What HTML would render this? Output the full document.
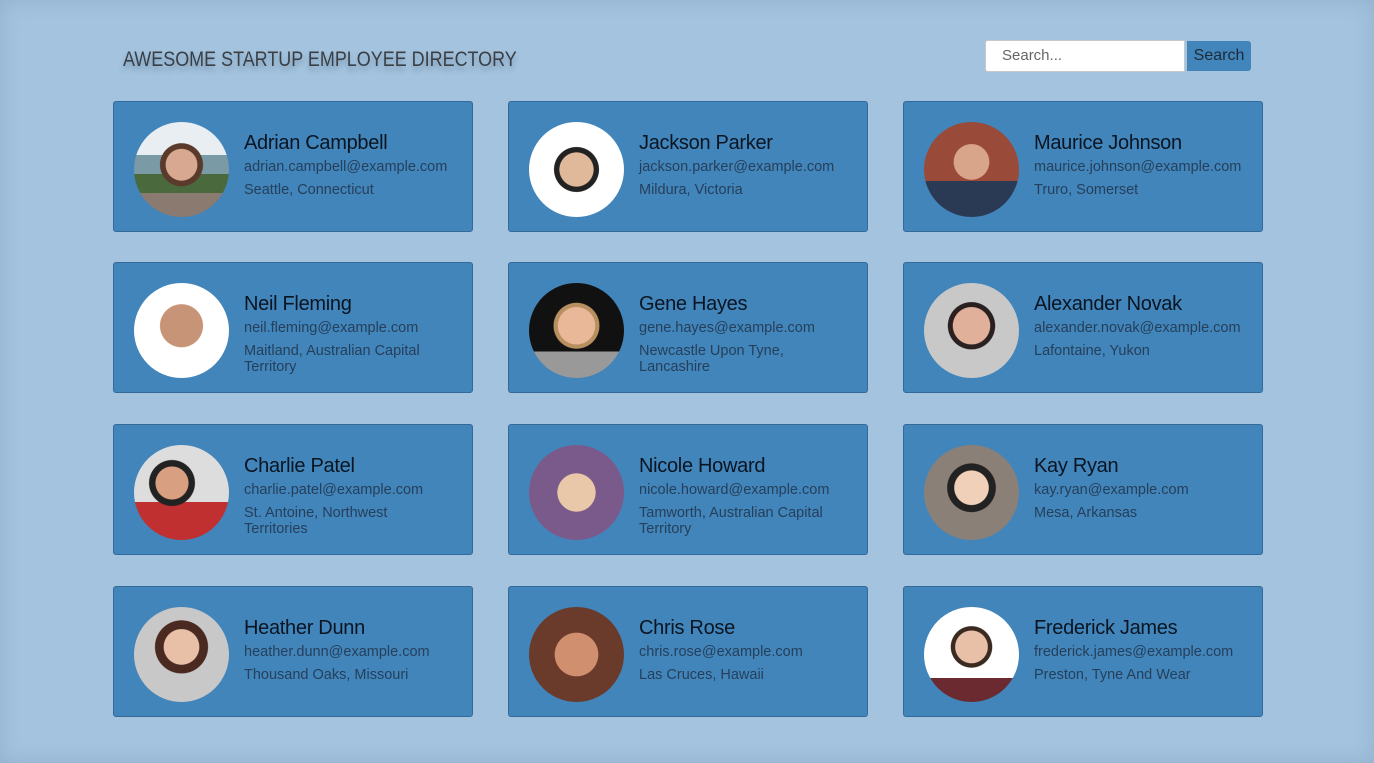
<!DOCTYPE html>
<html><head><meta charset="utf-8"><style>
html,body{margin:0;padding:0}
body{width:1374px;height:763px;background:#a3c3de;font-family:"Liberation Sans",sans-serif;position:relative;overflow:hidden;box-shadow:inset 0 0 20px rgba(60,90,120,.18)}
h1{position:absolute;left:123px;top:48px;margin:0;font-weight:normal;font-size:21px;color:#3a3f45;letter-spacing:0;text-shadow:0 4px 6px rgba(40,60,90,.35);transform:scaleX(0.855);transform-origin:left top;white-space:nowrap}
.search{position:absolute;left:985px;top:40px;width:200px;height:32px;background:#fff;border:1px solid #c8c8c8;border-radius:3px 0 0 3px;box-sizing:border-box;font-size:15px;color:#666;padding:6px 0 0 16px}
.btn{position:absolute;left:1187px;top:41px;width:64px;height:30px;background:#4185bb;border-radius:0 3px 3px 0;font-size:16px;color:#1d2a38;text-align:center;line-height:29px}
.card{position:absolute;width:358px;height:129px;background:#4185bb;border:1px solid #35699a;border-radius:3px}
.av{position:absolute;left:20px;top:20px;width:95px;height:95px;border-radius:50%;overflow:hidden}
.n{position:absolute;left:130px;top:30px;font-size:20px;color:#0b1521;letter-spacing:-0.3px}
.e{position:absolute;left:130px;top:57px;font-size:14.5px;color:#263f5a}
.l{position:absolute;left:130px;top:80px;font-size:14.5px;color:#263f5a;line-height:16px;width:200px}
</style></head><body>
<h1>AWESOME STARTUP EMPLOYEE DIRECTORY</h1>
<div class="search">Search...</div><div class="btn">Search</div>

<div class="card" style="left:113px;top:101px"><div class="av" style="background:radial-gradient(circle at 50% 45%,#d8a890 0 22%,#5a3a2a 23% 30%,transparent 31%),linear-gradient(#e8eef2 0 35%,#7a9aa6 35% 55%,#4a6a3e 55% 75%,#8a7a70 75%)"></div><div class="n">Adrian Campbell</div><div class="e">adrian.campbell@example.com</div><div class="l">Seattle, Connecticut</div></div>
<div class="card" style="left:508px;top:101px"><div class="av" style="background:radial-gradient(circle at 50% 50%,#e0b89a 0 25%,#222 26% 33%,#fff 34%)"></div><div class="n">Jackson Parker</div><div class="e">jackson.parker@example.com</div><div class="l">Mildura, Victoria</div></div>
<div class="card" style="left:903px;top:101px"><div class="av" style="background:radial-gradient(circle at 50% 42%,#d9a58a 0 24%,transparent 25%),linear-gradient(#9a4a38 0 62%,#2a3a55 62%)"></div><div class="n">Maurice Johnson</div><div class="e">maurice.johnson@example.com</div><div class="l">Truro, Somerset</div></div>

<div class="card" style="left:113px;top:262px"><div class="av" style="background:radial-gradient(circle at 50% 45%,#c89478 0 30%,#fff 31%)"></div><div class="n">Neil Fleming</div><div class="e">neil.fleming@example.com</div><div class="l">Maitland, Australian Capital Territory</div></div>
<div class="card" style="left:508px;top:262px"><div class="av" style="background:radial-gradient(circle at 50% 45%,#e8b898 0 26%,#b89060 27% 32%,transparent 33%),linear-gradient(#111 0 72%,#999 72%)"></div><div class="n">Gene Hayes</div><div class="e">gene.hayes@example.com</div><div class="l">Newcastle Upon Tyne, Lancashire</div></div>
<div class="card" style="left:903px;top:262px"><div class="av" style="background:radial-gradient(circle at 50% 45%,#e0b09a 0 26%,#2a2020 27% 33%,#c8c8c8 34%)"></div><div class="n">Alexander Novak</div><div class="e">alexander.novak@example.com</div><div class="l">Lafontaine, Yukon</div></div>

<div class="card" style="left:113px;top:424px"><div class="av" style="background:radial-gradient(circle at 40% 40%,#d8a080 0 20%,#222 21% 28%,transparent 29%),linear-gradient(#ddd 0 60%,#c03030 60%)"></div><div class="n">Charlie Patel</div><div class="e">charlie.patel@example.com</div><div class="l">St. Antoine, Northwest Territories</div></div>
<div class="card" style="left:508px;top:424px"><div class="av" style="background:radial-gradient(circle at 50% 50%,#e8c8a8 0 28%,#7a5a8a 29%)"></div><div class="n">Nicole Howard</div><div class="e">nicole.howard@example.com</div><div class="l">Tamworth, Australian Capital Territory</div></div>
<div class="card" style="left:903px;top:424px"><div class="av" style="background:radial-gradient(circle at 50% 45%,#f0d0b8 0 24%,#222 25% 34%,#8a8078 35%)"></div><div class="n">Kay Ryan</div><div class="e">kay.ryan@example.com</div><div class="l">Mesa, Arkansas</div></div>

<div class="card" style="left:113px;top:586px"><div class="av" style="background:radial-gradient(circle at 50% 42%,#e8c0a8 0 24%,#4a2a20 25% 36%,#c8c8c8 37%)"></div><div class="n">Heather Dunn</div><div class="e">heather.dunn@example.com</div><div class="l">Thousand Oaks, Missouri</div></div>
<div class="card" style="left:508px;top:586px"><div class="av" style="background:radial-gradient(circle at 50% 50%,#d09070 0 32%,#6a3a2a 33%)"></div><div class="n">Chris Rose</div><div class="e">chris.rose@example.com</div><div class="l">Las Cruces, Hawaii</div></div>
<div class="card" style="left:903px;top:586px"><div class="av" style="background:radial-gradient(circle at 50% 42%,#e8c0a8 0 22%,#3a2a20 23% 28%,transparent 29%),linear-gradient(#fff 0 75%,#6a2a30 75%)"></div><div class="n">Frederick James</div><div class="e">frederick.james@example.com</div><div class="l">Preston, Tyne And Wear</div></div>
</body></html>
